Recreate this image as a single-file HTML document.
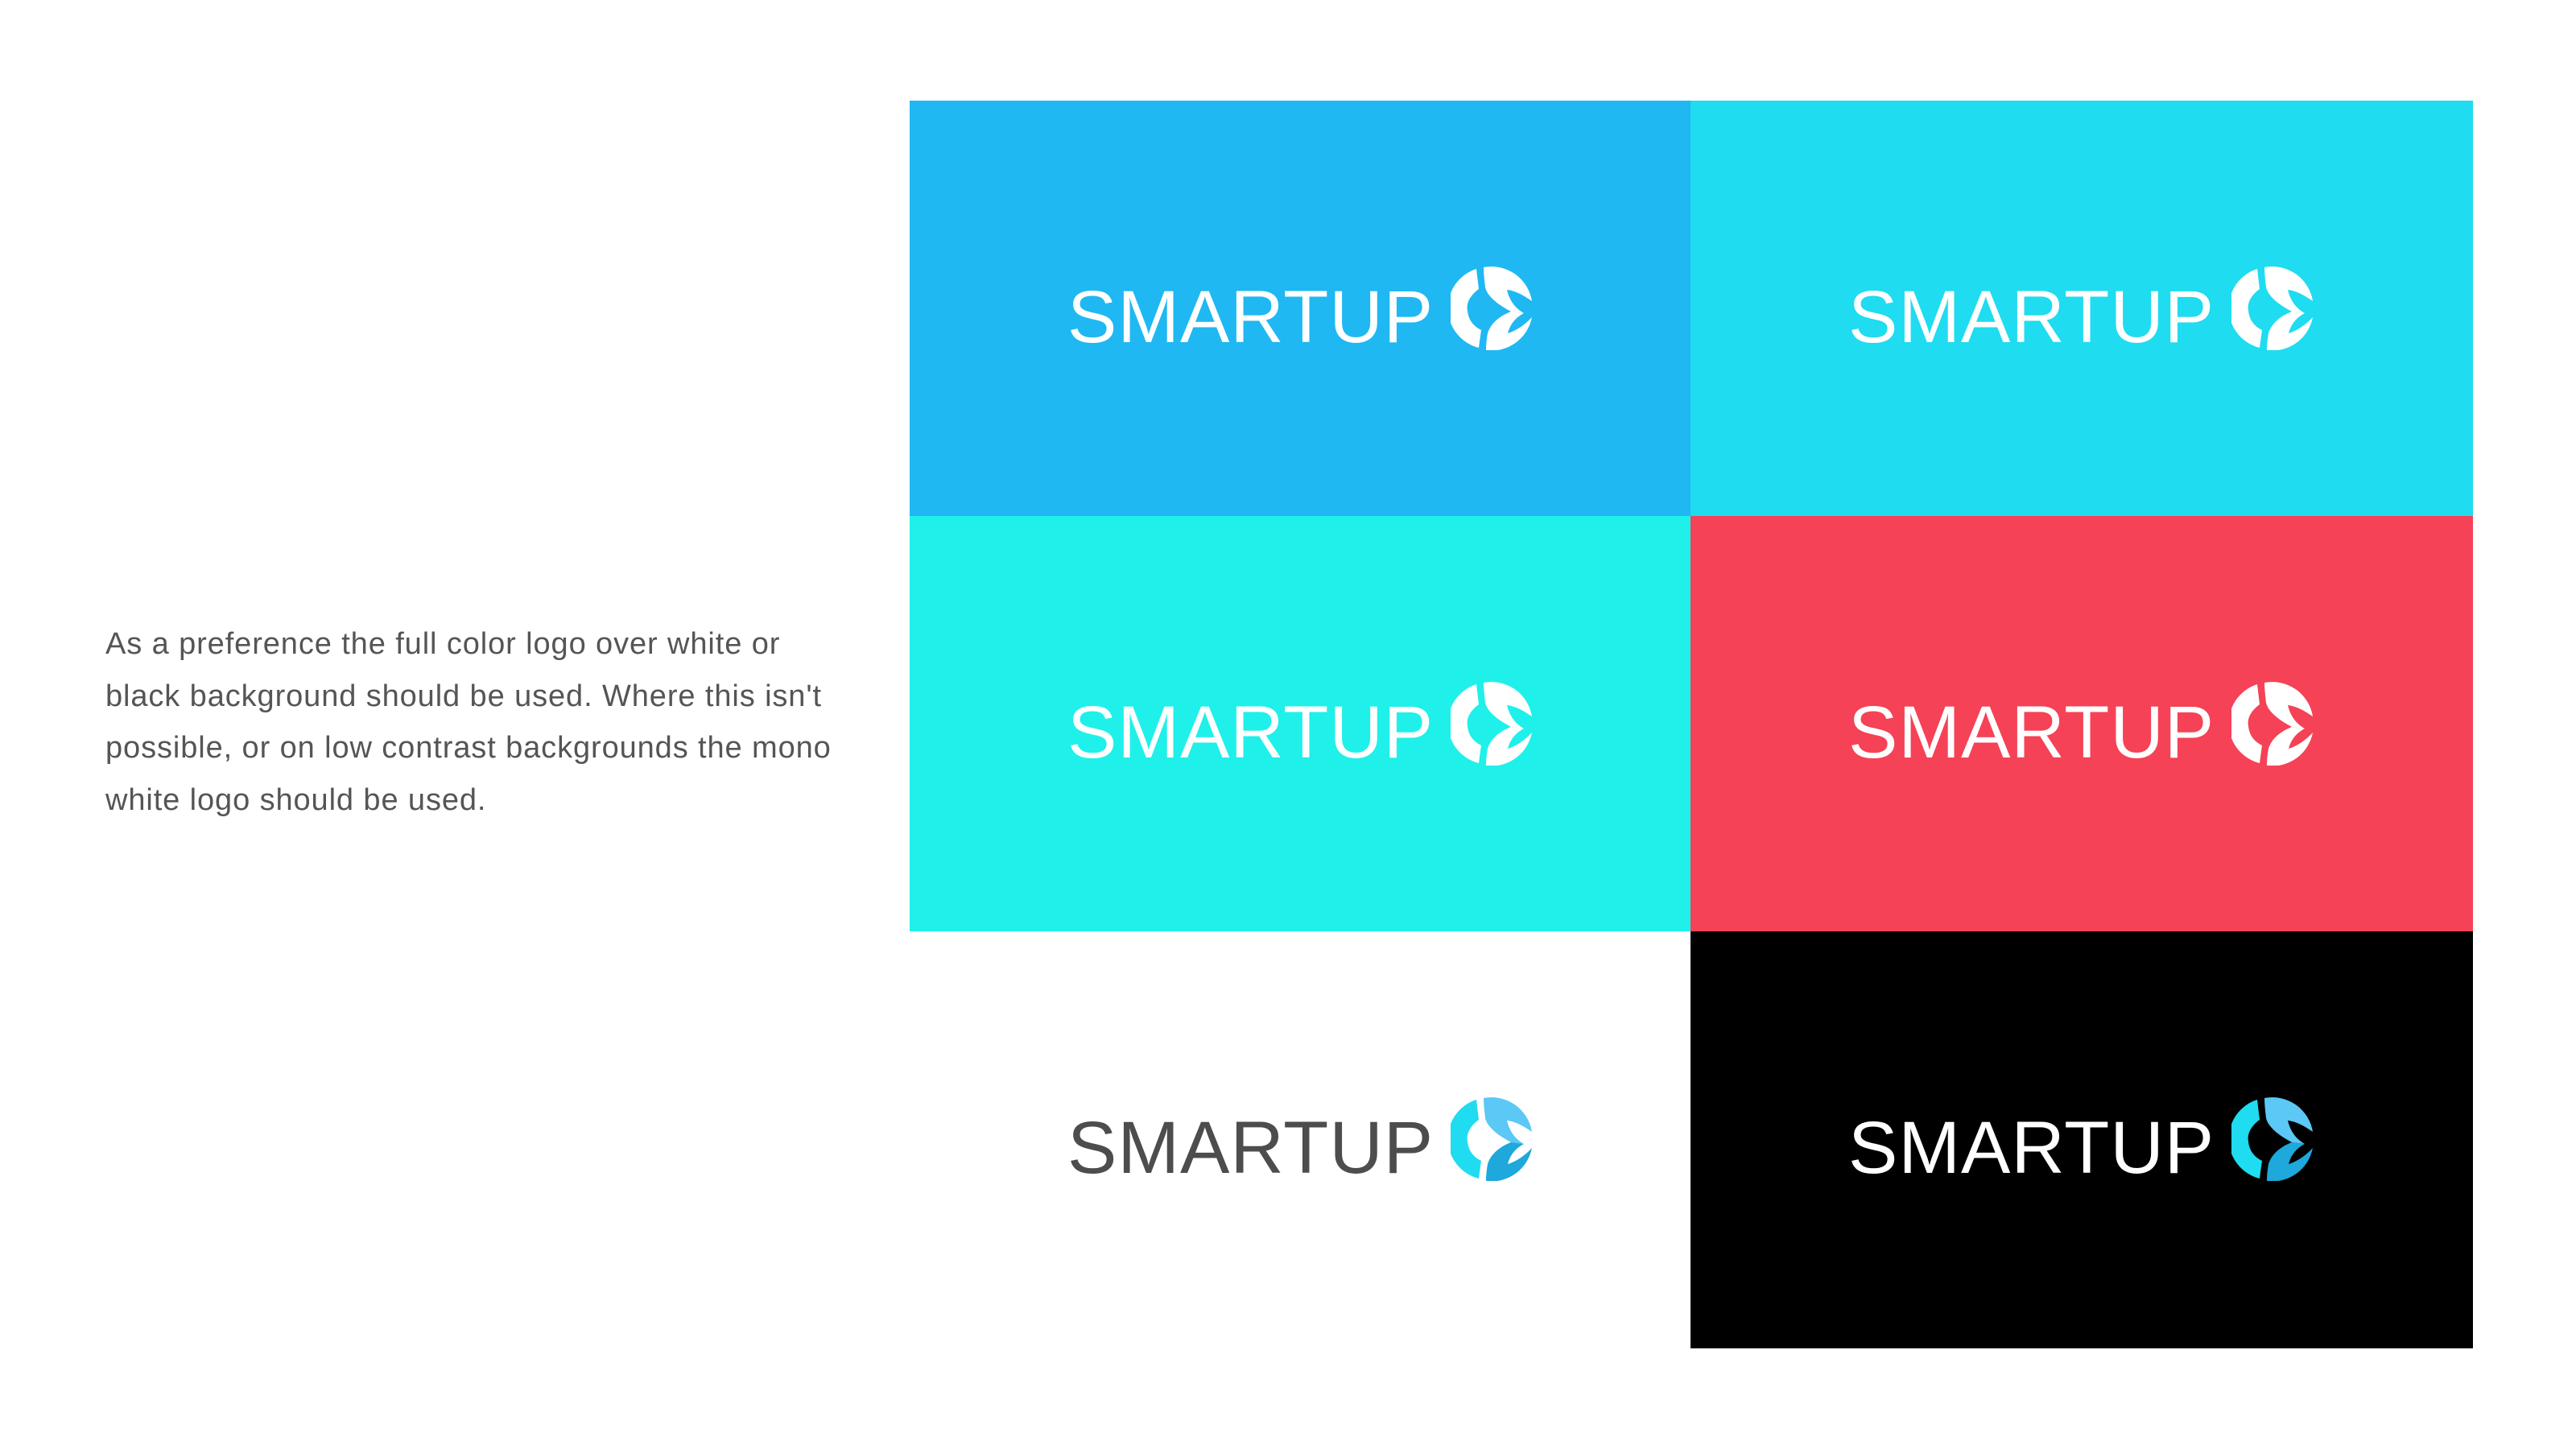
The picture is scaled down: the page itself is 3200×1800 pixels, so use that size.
<!DOCTYPE html>
<html><head><meta charset="utf-8">
<style>
html,body{margin:0;padding:0;background:#fff;}
body{width:3200px;height:1800px;position:relative;overflow:hidden;font-family:"Liberation Sans",sans-serif;}
.c{position:absolute;width:971px;height:516px;}
.t{position:absolute;left:196px;top:214px;font-size:92px;line-height:110px;white-space:nowrap;letter-spacing:1px;}
.i{position:absolute;left:672px;top:206px;width:102px;height:104px;}
.p{position:absolute;left:131px;top:768px;font-size:38px;line-height:64.5px;color:#555;white-space:nowrap;letter-spacing:0.9px;}
</style></head><body>
<svg width="0" height="0" style="position:absolute">
<defs>
<path id="pl" d="M32,3 C33,12 34,20 35,28 C24,36 19,46 21,55 C22,66 28,74 38,79 C37,86 36,93 35,101 A51,51 0 0 1 32,3 Z"/>
<path id="pu" d="M41,1 A51,51 0 0 1 101,43 C88,34 79,30 70,29 C73,42 80,52 91,58 L75,56 C60,48 46,38 43,26 C42,17 41,9 41,1 Z"/>
<path id="pd" d="M75,56 L91,58 C80,64 74,72 71,83 C81,80 92,73 101,63 A51,51 0 0 1 44,104 C44,96 45,89 46,83 C50,70 62,61 75,56 Z"/>
</defs></svg>

<div class="p">As a preference the full color logo over white or<br>black background should be used. Where this isn't<br>possible, or on low contrast backgrounds the mono<br>white logo should be used.</div>

<div class="c" style="left:1130px;top:125px;background:#1fb8f2;">
<div class="t" style="color:#fff">SMARTUP</div>
<svg class="i" viewBox="0 0 102 104"><g fill="#fff"><use href="#pl"/><use href="#pu"/><use href="#pd"/></g></svg>
</div>
<div class="c" style="left:2100px;top:125px;width:972px;background:#1fdcf0;">
<div class="t" style="color:#fff">SMARTUP</div>
<svg class="i" viewBox="0 0 102 104"><g fill="#fff"><use href="#pl"/><use href="#pu"/><use href="#pd"/></g></svg>
</div>
<div class="c" style="left:1130px;top:641px;background:#1ff0ea;">
<div class="t" style="color:#fff">SMARTUP</div>
<svg class="i" viewBox="0 0 102 104"><g fill="#fff"><use href="#pl"/><use href="#pu"/><use href="#pd"/></g></svg>
</div>
<div class="c" style="left:2100px;top:641px;width:972px;background:#f54256;">
<div class="t" style="color:#fff">SMARTUP</div>
<svg class="i" viewBox="0 0 102 104"><g fill="#fff"><use href="#pl"/><use href="#pu"/><use href="#pd"/></g></svg>
</div>
<div class="c" style="left:1130px;top:1157px;height:518px;background:#fff;">
<div class="t" style="color:#4d4d4d">SMARTUP</div>
<svg class="i" viewBox="0 0 102 104"><use href="#pl" fill="#1fdcf0"/><use href="#pu" fill="#5bc8f5"/><use href="#pd" fill="#1ea8dc"/></svg>
</div>
<div class="c" style="left:2100px;top:1157px;width:972px;height:518px;background:#000;">
<div class="t" style="color:#fff">SMARTUP</div>
<svg class="i" viewBox="0 0 102 104"><use href="#pl" fill="#1fdcf0"/><use href="#pu" fill="#5bc8f5"/><use href="#pd" fill="#1ea8dc"/></svg>
</div>
</body></html>
